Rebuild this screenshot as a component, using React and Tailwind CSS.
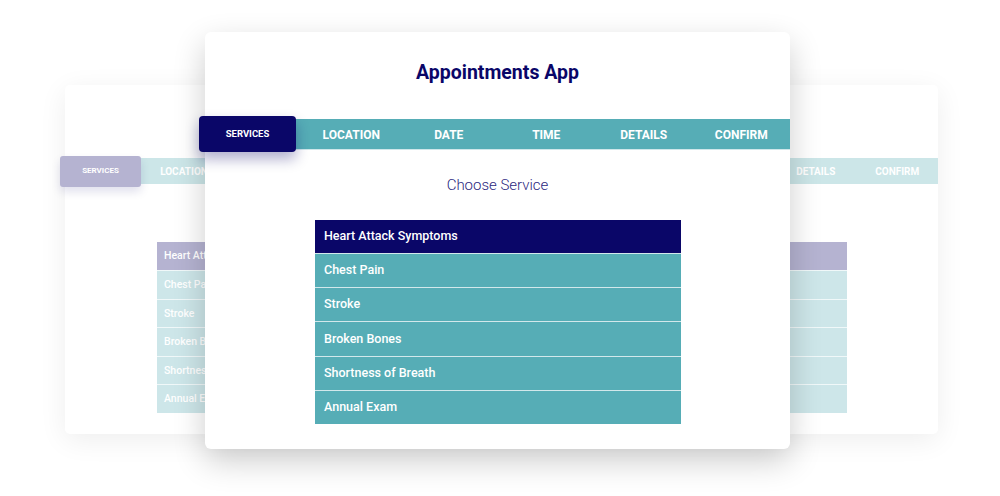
import React from "react";

const tabs = ["SERVICES", "LOCATION", "DATE", "TIME", "DETAILS", "CONFIRM"];
const services = [
  "Heart Attack Symptoms",
  "Chest Pain",
  "Stroke",
  "Broken Bones",
  "Shortness of Breath",
  "Annual Exam",
];

const font = { fontFamily: "Roboto, 'Liberation Sans', sans-serif" };

// the faded copy sitting behind (its middle is covered by the front card)
const BackCard = () => {
  return (
    <div className="col-start-1 row-start-1 ml-[65px] mt-[85px] w-[873px] h-[349px] bg-white rounded-[5px] shadow-[0_6px_28px_rgba(0,0,0,0.07)] flex flex-col">
      <div className="mt-[73px] flex h-[26px] bg-[#cce6e8]">
        <div className="-ml-[5px] -my-[2.5px] w-[81px] shrink-0 rounded-[3px] bg-[#b5b3d1] shadow-[0_5px_10px_rgba(10,6,104,0.12)] flex items-center justify-center text-[8px] font-bold text-white">
          SERVICES
        </div>
        {tabs.slice(1, 4).map((t) => (
          <div key={t} className="w-[86px] flex items-center justify-center text-[10px] font-bold text-white">
            {t}
          </div>
        ))}
        <div className="flex-1" />
        {tabs.slice(4).map((t) => (
          <div key={t} className="w-[81.5px] flex items-center justify-center text-[10px] font-bold text-white">
            {t}
          </div>
        ))}
      </div>
      <div className="ml-[92px] mt-[58px] w-[690px] flex flex-col">
        {services.map((s, i) => (
          <div
            key={s}
            className={
              i === 0
                ? "h-[28px] bg-[#b5b3d1] flex items-center pl-[7px] text-[10.5px] font-medium text-white"
                : "h-[28.6px] bg-[#cde6e9] border-t border-white/70 flex items-center pl-[7px] text-[10.5px] font-medium text-white"
            }
          >
            {s}
          </div>
        ))}
      </div>
    </div>
  );
};

const FrontCard = () => {
  return (
    <div className="col-start-1 row-start-1 ml-[205px] mt-[32px] w-[585px] h-[417px] bg-white rounded-[6px] shadow-[0_12px_32px_rgba(0,0,0,0.2)] flex flex-col">
      <h1 className="pt-[29px] text-center text-[19.5px] leading-[24px] font-bold text-[#0a0668]">
        Appointments App
      </h1>
      <div className="mt-[34px] grid grid-cols-6 h-[31px] bg-[#56adb6] border-b border-[#cfe7ea]">
        <div className="-ml-[6px] -mt-[3px] -mb-[3px] w-[97px] rounded-[4px] bg-[#0a0668] shadow-[0_7px_14px_rgba(10,6,104,0.32)] flex items-center justify-center text-[9.5px] font-bold text-white">
          SERVICES
        </div>
        {tabs.slice(1).map((t) => (
          <div key={t} className="pt-[1px] flex items-center justify-center text-[12px] font-bold text-white">
            {t}
          </div>
        ))}
      </div>
      <p className="mt-[26px] text-center text-[15px] leading-[18px] font-light text-[#2c2880]">
        Choose Service
      </p>
      <div className="ml-[110px] mt-[26px] w-[366px] flex flex-col">
        {services.map((s, i) => (
          <div
            key={s}
            className={
              i === 0
                ? "h-[33px] bg-[#0a0668] flex items-center pl-[9px] text-[12.5px] font-medium text-white"
                : "h-[34.2px] bg-[#56adb6] border-t border-[#d2e8eb] flex items-center pl-[9px] text-[12.5px] font-medium text-white"
            }
          >
            {s}
          </div>
        ))}
      </div>
    </div>
  );
};

export default function App() {
  return (
    <div className="w-[1000px] h-[496px] bg-white overflow-hidden grid grid-cols-1 grid-rows-1 items-start justify-items-start" style={font}>
      <BackCard />
      <FrontCard />
    </div>
  );
}
